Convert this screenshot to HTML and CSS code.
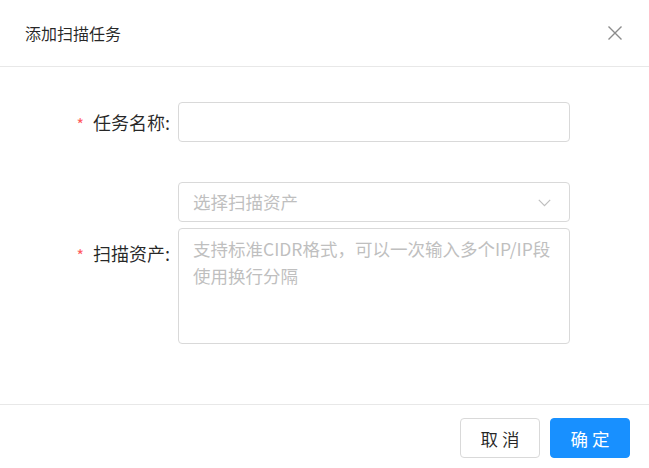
FILE: index.html
```html
<!DOCTYPE html>
<html lang="zh-CN">
<head>
<meta charset="utf-8">
<link rel="stylesheet" href="styles.css">
</head>
<body>
<div class="modal">
  <div class="modal-header">
    <div class="modal-title">添加扫描任务</div>
    <span class="close">
      <svg width="16" height="16" viewBox="0 0 16 16"><path d="M1.5 1.5L14.5 14.5M14.5 1.5L1.5 14.5" stroke="#8c8c8c" stroke-width="1.4" fill="none"/></svg>
    </span>
  </div>
  <div class="modal-body">
    <div class="form">
      <label class="label label-one"><span class="req">*</span>任务名称:</label>
      <div class="control">
        <input class="input" type="text">
      </div>
      <div class="spacer"></div>
      <label class="label label-two"><span class="req">*</span>扫描资产:</label>
      <div class="control stack">
        <div class="select">
          <span class="select-ph">选择扫描资产</span>
          <svg class="arrow" width="13" height="8" viewBox="0 0 13 8"><path d="M0.8 0.8L6.5 6.6L12.2 0.8" stroke="#bfbfbf" stroke-width="1.2" fill="none"/></svg>
        </div>
        <textarea class="textarea" placeholder="支持标准CIDR格式，可以一次输入多个IP/IP段&#10;使用换行分隔"></textarea>
      </div>
    </div>
  </div>
  <div class="modal-footer">
    <button class="btn">取 消</button>
    <button class="btn primary">确 定</button>
  </div>
</div>
</body>
</html>
```

FILE: styles.css
```css
html, body {
  margin: 0;
  padding: 0;
  background: #fff;
}
body {
  font-family: "Noto Sans CJK SC", "Noto Sans", "Liberation Sans", sans-serif;
  color: rgba(0, 0, 0, 0.85);
}
.modal {
  width: 649px;
  height: 468px;
  display: flex;
  flex-direction: column;
  background: #fff;
}
.modal-header {
  height: 66px;
  box-sizing: content-box;
  border-bottom: 1px solid #e8e8e8;
  display: flex;
  align-items: center;
  justify-content: space-between;
  padding: 0 26px 0 25px;
}
.modal-title {
  font-size: 16px;
  line-height: 24px;
  color: rgba(0, 0, 0, 0.85);
}
.close {
  display: flex;
  width: 16px;
  height: 16px;
}
.modal-body {
  flex: 1;
  padding-top: 35px;
}
.form {
  display: grid;
  grid-template-columns: 170px 392px;
  column-gap: 8px;
}
.label {
  font-size: 18px;
  line-height: 24px;
  text-align: right;
  white-space: nowrap;
  color: rgba(0, 0, 0, 0.85);
}
.label-one {
  align-self: center;
}
.label-two {
  align-self: start;
  margin-top: 59px;
}
.req {
  color: #ff5b5e;
  font-size: 16px;
  margin-right: 9px;
  position: relative;
  top: 1px;
}
.spacer {
  grid-column: 1 / 3;
  height: 40px;
}
.stack {
  display: flex;
  flex-direction: column;
  gap: 6px;
}
.input, .select, .textarea {
  box-sizing: border-box;
  width: 392px;
  border: 1px solid #d9d9d9;
  border-radius: 4px;
  background: #fff;
  font-family: inherit;
  font-size: 17.5px;
  margin: 0;
  outline: none;
}
.input {
  height: 40px;
  padding: 0 14px;
  display: block;
}
.select {
  height: 40px;
  padding: 0 14px;
  display: flex;
  align-items: center;
  justify-content: space-between;
}
.select-ph {
  color: #bfbfbf;
  line-height: 24px;
}
.arrow {
  margin-right: 4px;
  margin-top: 1px;
}
.textarea {
  height: 116px;
  padding: 6px 14px;
  line-height: 27px;
  resize: none;
  display: block;
  color: rgba(0, 0, 0, 0.85);
}
.textarea::placeholder {
  color: #bfbfbf;
}
.modal-footer {
  border-top: 1px solid #e8e8e8;
  height: 64px;
  flex: none;
  display: flex;
  justify-content: flex-end;
  align-items: flex-start;
  padding: 13px 19px 0 0;
  box-sizing: border-box;
  gap: 10px;
}
.btn {
  width: 80px;
  height: 40px;
  border: 1px solid #d9d9d9;
  border-radius: 4px;
  background: #fff;
  font-family: inherit;
  font-size: 17.5px;
  color: rgba(0, 0, 0, 0.85);
  padding: 0;
}
.btn.primary {
  background: #1890ff;
  border-color: #1890ff;
  color: #fff;
}
```
